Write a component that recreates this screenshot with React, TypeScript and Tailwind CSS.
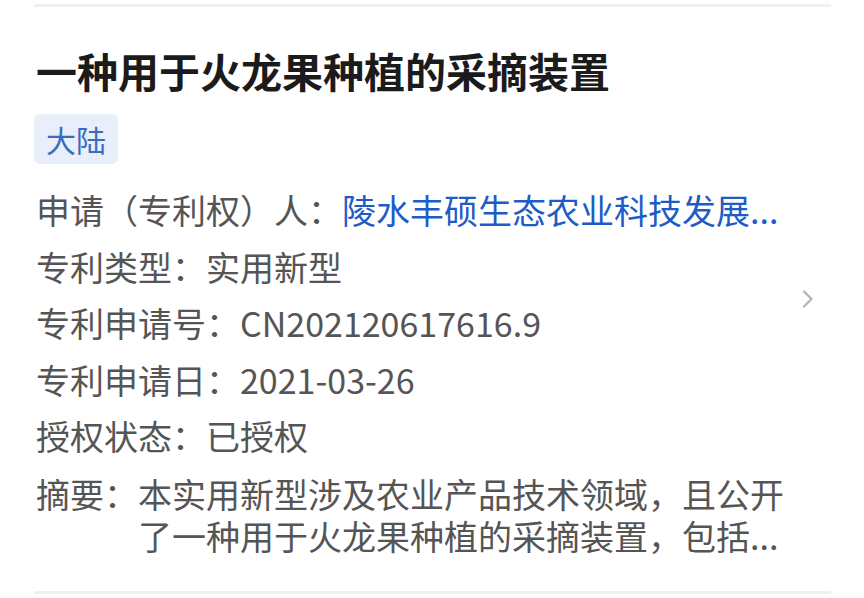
const rows = [
  { label: "专利类型：", value: "实用新型" },
  { label: "专利申请号：", value: "CN202120617616.9" },
  { label: "专利申请日：", value: "2021-03-26" },
  { label: "授权状态：", value: "已授权" },
];

export default function App() {
  return (
    <div className="w-[864px] h-[598px] bg-white pl-[34px] pr-[33px] pt-[4px] font-['Noto_Sans_CJK_SC',sans-serif]">
      <div className="h-[3px] bg-[#f0f0f0]" />
      <div className="flex items-center">
        <div className="flex-1 min-w-0 pl-[2px]">
          <h1 className="mt-[39px] text-[41px] leading-[48px] font-bold text-[#1b1b1b]">
            一种用于火龙果种植的采摘装置
          </h1>
          <div className="mt-[20px] -ml-[2px] inline-flex h-[50px] items-center rounded-md bg-[#e9effa] px-[12px] text-[30px] text-[#3a6cbd]">
            大陆
          </div>
          <div className="mt-[18px] text-[34px] text-[#555555]">
            <div className="flex leading-[56.5px]">
              <span className="shrink-0">申请（专利权）人：</span>
              <span className="text-[#1d5cc6] whitespace-nowrap">陵水丰硕生态农业科技发展...</span>
            </div>
            {rows.map((r) => (
              <div key={r.label} className="leading-[56.5px] whitespace-nowrap">
                {r.label}
                {r.value}
              </div>
            ))}
            <div className="mt-[8px] flex leading-[42px] whitespace-nowrap">
              <span className="shrink-0">摘要：</span>
              <div>
                <div>本实用新型涉及农业产品技术领域，且公开</div>
                <div>了一种用于火龙果种植的采摘装置，包括...</div>
              </div>
            </div>
          </div>
          <div className="h-[34px]" />
        </div>
        <svg
          width="16"
          height="20"
          viewBox="0 0 16 20"
          className="mr-[15px] ml-[20px] shrink-0"
          fill="none"
          stroke="#b5b5b5"
          strokeWidth="2.4"
          strokeLinecap="round"
          strokeLinejoin="round"
        >
          <path d="M4 2.5 L11.5 10 L4 17.5" />
        </svg>
      </div>
      <div className="h-[3px] bg-[#f0f0f0]" />
    </div>
  );
}
